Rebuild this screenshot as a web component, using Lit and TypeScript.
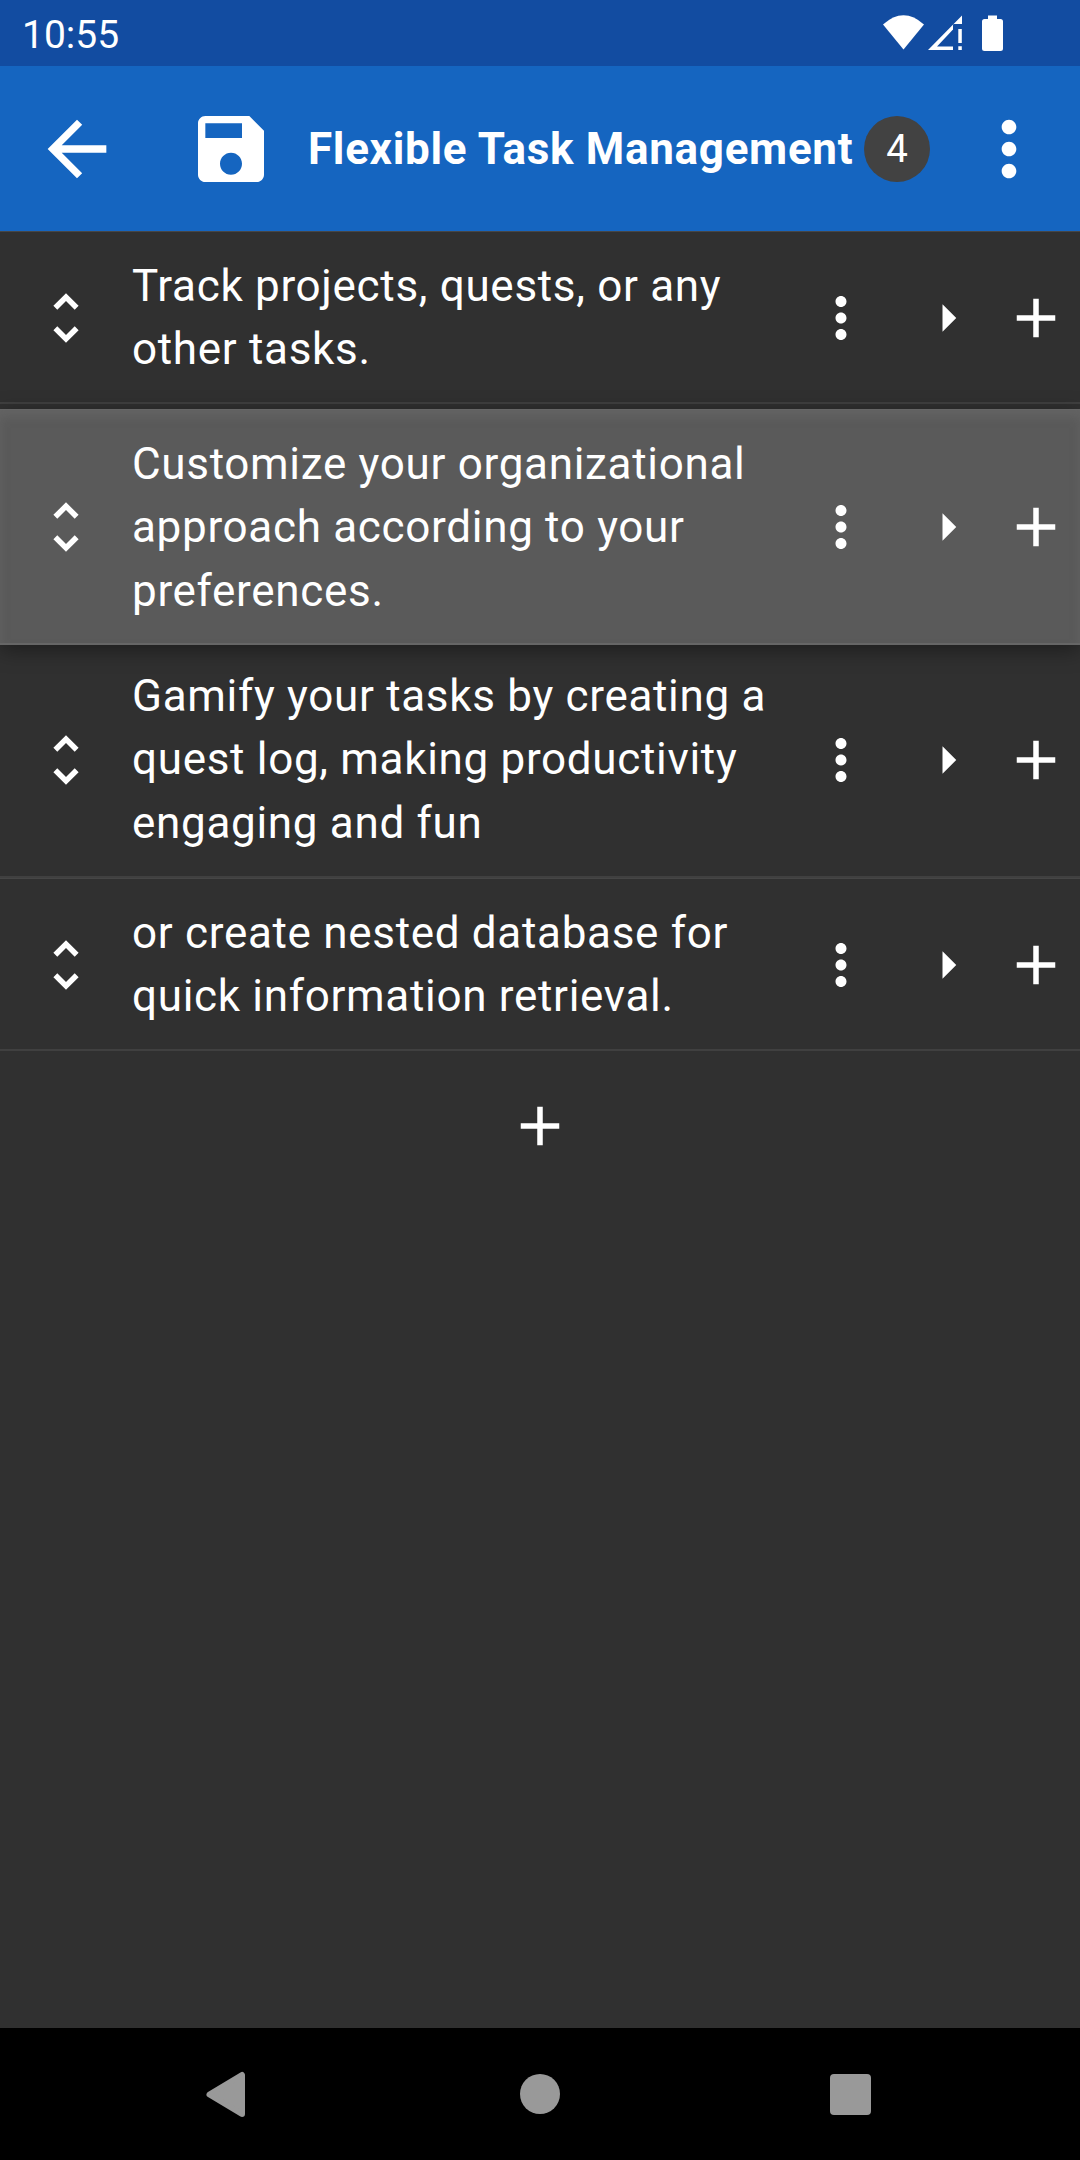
import { LitElement, html, css, svg } from "lit";
import { customElement, property } from "lit/decorators.js";
import { classMap } from "lit/directives/class-map.js";

const glyphs = {
  back: svg`<path d="M20 11H7.83l5.59-5.59L12 4l-8 8 8 8 1.41-1.41L7.83 13H20v-2z"/>`,
  save: svg`<path fill-rule="evenodd" d="M17 3H5c-1.11 0-2 .9-2 2v14c0 1.1.89 2 2 2h14c1.1 0 2-.9 2-2V7l-4-4zm-5 16c-1.66 0-3-1.34-3-3s1.34-3 3-3 3 1.34 3 3-1.34 3-3 3zm3-10H5V5h10v4z"/>`,
  more: svg`<path d="M12 8c1.1 0 2-.9 2-2s-.9-2-2-2-2 .9-2 2 .9 2 2 2zm0 2c-1.1 0-2 .9-2 2s.9 2 2 2 2-.9 2-2-.9-2-2-2zm0 6c-1.1 0-2 .9-2 2s.9 2 2 2 2-.9 2-2-.9-2-2-2z"/>`,
  unfold: svg`<path d="M12 5.83L15.17 9l1.41-1.41L12 3 7.41 7.59 8.83 9 12 5.83zm0 12.34L8.83 15l-1.41 1.41L12 21l4.59-4.59L15.17 15 12 18.17z"/>`,
  right: svg`<path d="M10 17l5-5-5-5v10z"/>`,
  add: svg`<path d="M19 13h-6v6h-2v-6H5v-2h6V5h2v6h6v2z"/>`,
};

type GlyphName = keyof typeof glyphs;

@customElement("app-icon")
class AppIcon extends LitElement {
  @property() name: GlyphName = "add";
  static styles = css`
    :host { display: block; flex: none; }
    svg { display: block; width: 100%; height: 100%; fill: #fff; }
  `;
  render() {
    return html`<svg viewBox="0 0 24 24">${glyphs[this.name]}</svg>`;
  }
}

@customElement("task-row")
class TaskRow extends LitElement {
  @property({ attribute: false }) lines: string[] = [];
  @property({ type: Boolean }) lifted = false;
  static styles = css`
    :host { display: block; }
    .row {
      box-sizing: border-box;
      display: flex;
      align-items: center;
      padding: 22.3px 0 20.67px;
      border-top: 1px solid #464646;
      border-bottom: 2px solid #404040;
      background: #303030;
    }
    .lifted {
      position: relative;
      top: 4.5px;
      z-index: 1;
      border-color: #666;
      background: #5a5a5a;
      box-shadow: 0 5px 20px rgba(0, 0, 0, 0.4), inset 0 7px 10px rgba(108, 108, 108, 0.5);
    }
    .handle { width: 66px; height: 66px; margin: 0 33px; }
    .text {
      flex: 1;
      padding-top: 0.9px;
      font-size: 44px;
      line-height: 63.25px;
      letter-spacing: 0.6875px;
      color: #fff;
    }
    .line { display: block; white-space: nowrap; }
    .more { width: 66px; height: 66px; margin-right: 41.5px; }
    .open { width: 66px; height: 66px; margin-right: 22px; }
    .plus { width: 66px; height: 66px; margin-right: 11px; }
  `;
  render() {
    return html`<div class=${classMap({ row: true, lifted: this.lifted })}>
      <app-icon class="handle" name="unfold"></app-icon>
      <div class="text">${this.lines.map((l) => html`<span class="line">${l}</span>`)}</div>
      <app-icon class="more" name="more"></app-icon>
      <app-icon class="open" name="right"></app-icon>
      <app-icon class="plus" name="add"></app-icon>
    </div>`;
  }
}

const tasks = [
  { lines: ["Track projects, quests, or any", "other tasks."], lifted: false },
  { lines: ["Customize your organizational", "approach according to your", "preferences."], lifted: true },
  { lines: ["Gamify your tasks by creating a", "quest log, making productivity", "engaging and fun"], lifted: false },
  { lines: ["or create nested database for", "quick information retrieval."], lifted: false },
];

@customElement("app-root")
class AppRoot extends LitElement {
  static styles = css`
    :host {
      display: flex;
      flex-direction: column;
      width: 1080px;
      height: 2160px;
      overflow: hidden;
      background: #303030;
      color: #fff;
      font-family: Roboto, sans-serif;
    }
    .status {
      flex: none;
      box-sizing: border-box;
      height: 66px;
      display: flex;
      align-items: center;
      justify-content: space-between;
      padding: 4px 73px 0 22px;
      background: #124ca1;
      font-size: 39px;
    }
    .signals { width: 125px; height: 40px; fill: #fff; margin-top: -4px; }
    .bar {
      flex: none;
      box-sizing: border-box;
      height: 165px;
      display: flex;
      align-items: center;
      padding: 0 27.5px 0 33px;
      background: #1565c0;
    }
    .bar-icon { width: 88px; height: 88px; }
    .save { margin-left: 66px; }
    .title {
      margin-left: 33px;
      font-size: 44px;
      font-weight: 700;
      letter-spacing: 0.6875px;
      white-space: nowrap;
    }
    .spacer { flex: 1; }
    .badge {
      flex: none;
      width: 66px;
      height: 66px;
      border-radius: 50%;
      background: #424242;
      display: flex;
      align-items: center;
      justify-content: center;
      font-size: 38.5px;
    }
    .overflow { margin-left: 34.5px; }
    .list { flex: none; }
    .append { display: flex; justify-content: center; padding-top: 42.25px; }
    .append-icon { width: 66px; height: 66px; }
    .grow { flex: 1; }
    .nav { flex: none; display: block; width: 1080px; height: 132px; background: #000; fill: #999; }
  `;
  render() {
    return html`
      <div class="status">
        <span>10:55</span>
        <svg class="signals" viewBox="882 13 125 40">
          <path d="M883 24.5Q903.5 6 924 24.5L903.5 49.5Z" />
          <path fill-rule="evenodd" d="M928 50L962 15.5V24H953V50ZM937 46.5H953V29.5Z" />
          <path d="M958.3 29h3.5v14h-3.5zM958.3 46.3h3.5v3.7h-3.5z" />
          <path d="M988 15.5h9v3.5h3.5q2.5 0 2.5 2.5v27q0 2.5-2.5 2.5h-16q-2.5 0-2.5-2.5v-27q0-2.5 2.5-2.5h3.5z" />
        </svg>
      </div>
      <div class="bar">
        <app-icon class="bar-icon" name="back"></app-icon>
        <app-icon class="bar-icon save" name="save"></app-icon>
        <span class="title">Flexible Task Management</span>
        <span class="spacer"></span>
        <span class="badge">4</span>
        <app-icon class="bar-icon overflow" name="more"></app-icon>
      </div>
      <div class="list">
        ${tasks.map((t) => html`<task-row .lines=${t.lines} ?lifted=${t.lifted}></task-row>`)}
      </div>
      <div class="append"><app-icon class="append-icon" name="add"></app-icon></div>
      <div class="grow"></div>
      <svg class="nav" viewBox="0 2028 1080 132">
        <path stroke="#999" stroke-width="6" stroke-linejoin="round" d="M209.5 2094.5L242 2075V2114Z" />
        <circle cx="540" cy="2094" r="20" />
        <rect x="830" y="2074" width="41" height="41" rx="4" />
      </svg>
    `;
  }
}
